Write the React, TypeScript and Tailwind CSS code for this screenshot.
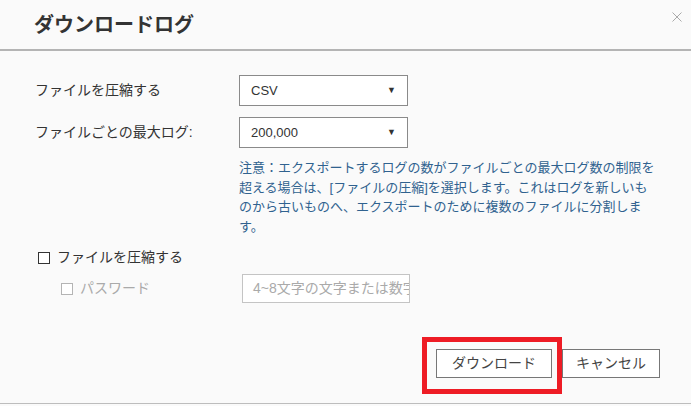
const font = { fontFamily: '"Liberation Sans", "Noto Sans CJK JP", sans-serif' };

function Select({ value }: { value: string }) {
  return (
    <div className="flex h-[31px] w-[169px] items-center justify-between border border-[#8a8a8a] bg-white pl-[11px] pr-[11px] text-[13px] text-[#333]">
      <span>{value}</span>
      <span className="text-[9px] text-[#333]">▼</span>
    </div>
  );
}

function Box({ muted }: { muted?: boolean }) {
  return (
    <span
      className={
        "inline-block h-[12px] w-[12px] border bg-white " +
        (muted ? "border-[#b4b4b4]" : "border-[#333]")
      }
    />
  );
}

export default function App() {
  return (
    <div className="relative h-[406px] w-[691px] bg-[#fafafa] text-[#333]" style={font}>
      <div className="flex h-[51px] items-center border-b-2 border-[#b4b4b4] pl-[34px]">
        <h1 className="text-[20px] font-bold text-[#333]">ダウンロードログ</h1>
      </div>
      <svg className="absolute left-[672px] top-[12px]" width="10" height="10" viewBox="0 0 10 10">
        <path d="M0.5 0.5L9.5 9.5M9.5 0.5L0.5 9.5" stroke="#aaa" strokeWidth="1" />
      </svg>

      <div className="flex h-[353px] flex-col border-b border-[#bdbdbd] pl-[35px] pr-[31px]">
        <div className="mt-[24px] flex items-center">
          <label className="w-[204px] text-[14px]">ファイルを圧縮する</label>
          <Select value="CSV" />
        </div>
        <div className="mt-[11px] flex items-center">
          <label className="w-[204px] text-[14px]">ファイルごとの最大ログ:</label>
          <Select value="200,000" />
        </div>
        <p className="ml-[204px] mt-[10px] text-[13px] leading-[19.5px] whitespace-nowrap text-[#30628f]">
          注意：エクスポートするログの数がファイルごとの最大ログ数の制限を
          <br />
          超える場合は、[ファイルの圧縮]を選択します。これはログを新しいも
          <br />
          のから古いものへ、エクスポートのために複数のファイルに分割しま
          <br />
          す。
        </p>

        <div className="mt-[11px] flex items-center gap-[7px] pl-[3px] text-[14px]">
          <Box />
          <span>ファイルを圧縮する</span>
        </div>
        <div className="mt-[6px] flex items-center">
          <div className="flex w-[207px] items-center gap-[7px] pl-[26px] text-[14px] text-[#aaa]">
            <Box muted />
            <span>パスワード</span>
          </div>
          <div className="flex h-[29px] w-[168px] items-center overflow-hidden border border-[#c4c4c4] bg-white px-[10px] text-[14px] whitespace-nowrap text-[#aaa]">
            4~8文字の文字または数字
          </div>
        </div>

        <div className="mt-auto mb-[25px] flex justify-end gap-[10px]">
          <button className="h-[29px] w-[116px] border border-[#777] bg-white text-[14px] text-[#444]">
            ダウンロード
          </button>
          <button className="h-[29px] w-[98px] border border-[#777] bg-white text-[14px] text-[#444]">
            キャンセル
          </button>
        </div>
      </div>

      <div className="pointer-events-none absolute left-[422px] top-[337px] h-[57px] w-[140px] border-[5px] border-[#ee1c25]" />
    </div>
  );
}
